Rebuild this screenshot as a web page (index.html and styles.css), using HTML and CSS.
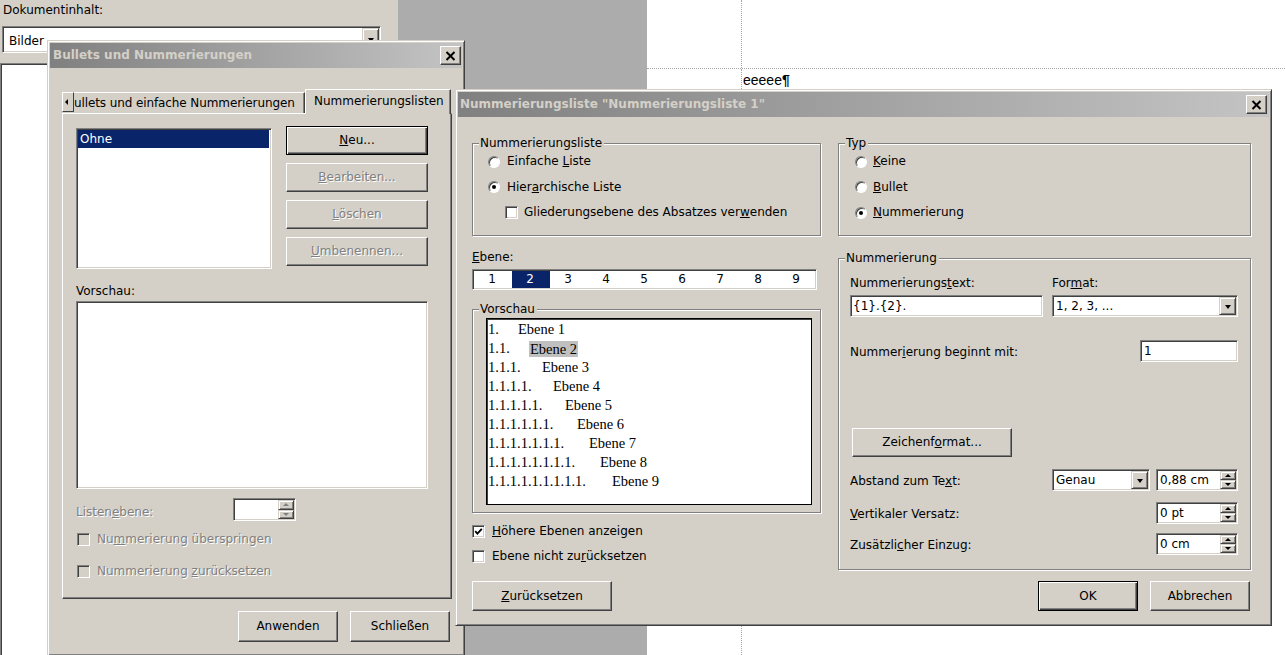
FILE: index.html
```html
<!DOCTYPE html>
<html lang="de">
<head>
<meta charset="utf-8">
<title>Nummerierungsliste</title>
<link rel="stylesheet" href="styles.css">
</head>
<body>
<div class="desktop">
  <div class="side">
    <div class="side-label">Dokumentinhalt:</div>
    <div class="field combo side-combo"><span class="combo-text">Bilder</span><span class="drop"></span></div>
    <div class="side-list"></div>
  </div>
  <div class="workspace"></div>
  <div class="doc">
    <div class="doc-top"><div class="doc-margin"></div></div>
    <div class="doc-body"><div class="doc-margin"></div><div class="doc-text">eeeee<span class="pilcrow">¶</span></div></div>
  </div>

  <div class="window dlg1">
    <div class="titlebar">
      <span class="title">Bullets und Nummerierungen</span>
      <span class="close-btn"><svg width="11" height="10" viewBox="0 0 11 10"><path d="M1.5 1 L9.5 9 M9.5 1 L1.5 9" stroke="#000" stroke-width="2"/></svg></span>
    </div>
    <div class="dlg1-body">
      <div class="tabstrip">
        <span class="tab-scroll"></span>
        <div class="tab tab-inactive"><span class="tab-label">ullets und einfache Nummerierungen</span></div>
        <div class="tab tab-active">Nummerierungslisten</div>
      </div>
      <div class="tabpanel">
        <div class="list-row">
          <div class="field listbox"><div class="list-item sel">Ohne</div></div>
          <div class="btn-col">
            <button class="btn default"><span><u>N</u>eu...</span></button>
            <button class="btn disabled"><span><u>B</u>earbeiten...</span></button>
            <button class="btn disabled"><span><u>L</u>öschen</span></button>
            <button class="btn disabled"><span><u>U</u>mbenennen...</span></button>
          </div>
        </div>
        <div class="plain-label vorschau-label">Vorschau:</div>
        <div class="field preview1"></div>
        <div class="level-row">
          <span class="plain-label disabled-text level-label">Listen<u>e</u>bene:</span>
          <div class="field spin spin-dis">
            <span class="spin-text"></span>
            <span class="spin-btns"><span class="sb up"></span><span class="sb down"></span></span>
          </div>
        </div>
        <div class="opt d1-check first"><span class="checkbox dis"></span><span class="disabled-text">Nu<u>m</u>merierung überspringen</span></div>
        <div class="opt d1-check"><span class="checkbox dis"></span><span class="disabled-text">Nummerierung <u>z</u>urücksetzen</span></div>
      </div>
      <div class="dlg1-buttons">
        <button class="btn w100">Anwenden</button>
        <button class="btn w100">Schließen</button>
      </div>
    </div>
  </div>

  <div class="window dlg2">
    <div class="titlebar">
      <span class="title">Nummerierungsliste "Nummerierungsliste 1"</span>
      <span class="close-btn"><svg width="11" height="10" viewBox="0 0 11 10"><path d="M1.5 1 L9.5 9 M9.5 1 L1.5 9" stroke="#000" stroke-width="2"/></svg></span>
    </div>
    <div class="dlg2-body">
      <div class="dlg2-grid">
        <div class="col-left">
          <div class="group g-list">
            <div class="legend">Nummerierungsliste</div>
            <div class="gc">
              <div class="opt"><span class="radio"></span><span>Einfache <u>L</u>iste</span></div>
              <div class="opt"><span class="radio on"></span><span>Hier<u>a</u>rchische Liste</span></div>
              <div class="opt sub"><span class="checkbox"></span><span>Gliederungsebene des Absatzes ver<u>w</u>enden</span></div>
            </div>
          </div>
          <div class="plain-label ebene-label"><u>E</u>bene:</div>
          <div class="levels">
            <span>1</span><span class="sel">2</span><span>3</span><span>4</span><span>5</span><span>6</span><span>7</span><span>8</span><span>9</span>
          </div>
          <div class="group g-preview">
            <div class="legend">Vorschau</div>
            <div class="gc">
              <div class="num-preview">
                <div class="prow"><span class="pn l1">1.</span><span>Ebene 1</span></div>
                <div class="prow"><span class="pn l2">1.1.</span><span class="hl">Ebene 2</span></div>
                <div class="prow"><span class="pn l3">1.1.1.</span><span>Ebene 3</span></div>
                <div class="prow"><span class="pn l4">1.1.1.1.</span><span>Ebene 4</span></div>
                <div class="prow"><span class="pn l5">1.1.1.1.1.</span><span>Ebene 5</span></div>
                <div class="prow"><span class="pn l6">1.1.1.1.1.1.</span><span>Ebene 6</span></div>
                <div class="prow"><span class="pn l7">1.1.1.1.1.1.1.</span><span>Ebene 7</span></div>
                <div class="prow"><span class="pn l8">1.1.1.1.1.1.1.1.</span><span>Ebene 8</span></div>
                <div class="prow"><span class="pn l9">1.1.1.1.1.1.1.1.1.</span><span>Ebene 9</span></div>
              </div>
            </div>
          </div>
          <div class="opt chk first-chk"><span class="checkbox checked"><svg width="9" height="9" viewBox="0 0 9 9"><path d="M1.2 4.2 L3.4 6.6 L7.8 1.8" fill="none" stroke="#000" stroke-width="1.9"/></svg></span><span><u>H</u>öhere Ebenen anzeigen</span></div>
          <div class="opt chk"><span class="checkbox"></span><span>Ebene nicht zu<u>r</u>ücksetzen</span></div>
        </div>
        <div class="col-right">
          <div class="group g-typ">
            <div class="legend">Typ</div>
            <div class="gc">
              <div class="opt"><span class="radio"></span><span><u>K</u>eine</span></div>
              <div class="opt"><span class="radio"></span><span><u>B</u>ullet</span></div>
              <div class="opt"><span class="radio on"></span><span><u>N</u>ummerierung</span></div>
            </div>
          </div>
          <div class="group g-num">
            <div class="legend">Nummerierung</div>
            <div class="gc">
              <div class="num-labels"><span class="w193">Nummerierungs<u>t</u>ext:</span><span>For<u>m</u>at:</span></div>
              <div class="num-inputs">
                <div class="field input w193">{1}.{2}.</div>
                <div class="field combo w186"><span class="combo-text">1, 2, 3, ...</span><span class="drop"></span></div>
              </div>
              <div class="frow r-begin"><span class="flabel">Nummer<u>i</u>erung beginnt mit:</span><div class="field input w98">1</div></div>
              <button class="btn zf"><span>Zeichenf<u>o</u>rmat...</span></button>
              <div class="frow r-abstand">
                <span class="flabel">Abstand zum Te<u>x</u>t:</span>
                <div class="field combo w98"><span class="combo-text">Genau</span><span class="drop"></span></div>
                <div class="field spin w82"><span class="spin-text">0,88 cm</span><span class="spin-btns"><span class="sb up"></span><span class="sb down"></span></span></div>
              </div>
              <div class="frow r-vert">
                <span class="flabel"><u>V</u>ertikaler Versatz:</span>
                <div class="field spin w82"><span class="spin-text">0 pt</span><span class="spin-btns"><span class="sb up"></span><span class="sb down"></span></span></div>
              </div>
              <div class="frow r-einzug">
                <span class="flabel">Zusätzli<u>c</u>her Einzug:</span>
                <div class="field spin w82"><span class="spin-text">0 cm</span><span class="spin-btns"><span class="sb up"></span><span class="sb down"></span></span></div>
              </div>
            </div>
          </div>
        </div>
      </div>
      <div class="dlg2-buttons">
        <button class="btn reset"><span><u>Z</u>urücksetzen</span></button>
        <div class="btn-pair">
          <button class="btn default w100">OK</button>
          <button class="btn w100">Abbrechen</button>
        </div>
      </div>
    </div>
  </div>
</div>
</body>
</html>
```

FILE: styles.css
```css
* { box-sizing: border-box; }
html, body { margin: 0; padding: 0; }
body {
  width: 1285px;
  height: 655px;
  overflow: hidden;
  font-family: "DejaVu Sans", Verdana, sans-serif;
  font-size: 12px;
  line-height: 15px;
  color: #000;
  background: #d4d0c8;
}
u { text-decoration: underline; text-underline-offset: 1px; }

.desktop { position: relative; display: flex; width: 1285px; height: 655px; }

/* ---------- background panels ---------- */
.side { width: 398px; background: #d4d0c8; display: flex; flex-direction: column; }
.side-label { padding: 3px 0 0 3px; height: 18px; }
.side-combo { margin: 8px 0 0 2px; width: 379px; height: 27px; }
.side-list {
  margin-top: 10px;
  width: 381px;
  flex: 1;
  background: #fff;
  border-top: 1px solid #808080;
  border-left: 1px solid #808080;
  box-shadow: inset 1px 1px 0 #404040;
}
.workspace { width: 249px; background: #acacac; }
.doc { flex: 1; background: #fff; display: flex; flex-direction: column; }
.doc-top { height: 69px; border-bottom: 1px dotted #a8a8a8; display: flex; }
.doc-margin { width: 95px; border-right: 1px dotted #a8a8a8; }
.doc-body { flex: 1; display: flex; }
.doc-text { padding: 3px 0 0 1px; font-family: "Liberation Sans", Arial, sans-serif; font-size: 14px; line-height: 16px; }
.pilcrow { font-weight: bold; }

/* ---------- generic controls ---------- */
.field {
  background: #fff;
  border: 1px solid;
  border-color: #808080 #fff #fff #808080;
  box-shadow: inset 1px 1px 0 #404040, inset -1px -1px 0 #d4d0c8;
}
.input { height: 22px; display: flex; align-items: center; padding-left: 2px; }
.combo { display: flex; align-items: stretch; }
.combo-text { flex: 1; display: flex; align-items: center; padding-left: 3px; white-space: nowrap; }
.side-combo .combo-text { padding: 3px 0 0 6px; }
.drop {
  width: 17px;
  margin: 1px 1px 1px 0;
  background: #d4d0c8;
  border: 1px solid;
  border-color: #d4d0c8 #404040 #404040 #d4d0c8;
  box-shadow: inset 1px 1px 0 #fff, inset -1px -1px 0 #808080;
  display: flex;
  align-items: center;
  justify-content: center;
}
.drop::after {
  content: "";
  border-left: 3.5px solid transparent;
  border-right: 3.5px solid transparent;
  border-top: 4px solid #000;
  margin-top: 1px;
}
.spin { display: flex; align-items: stretch; height: 22px; }
.spin-text { flex: 1; display: flex; align-items: center; padding-left: 3px; white-space: nowrap; }
.spin-btns { width: 16px; display: flex; flex-direction: column; margin: 1px 1px 1px 0; }
.sb {
  flex: 1;
  background: #d4d0c8;
  border: 1px solid;
  border-color: #d4d0c8 #404040 #404040 #d4d0c8;
  box-shadow: inset 1px 1px 0 #fff, inset -1px -1px 0 #808080;
  display: flex;
  align-items: center;
  justify-content: center;
}
.sb.up::after { content: ""; border-left: 3px solid transparent; border-right: 3px solid transparent; border-bottom: 3px solid #000; }
.sb.down::after { content: ""; border-left: 3px solid transparent; border-right: 3px solid transparent; border-top: 3px solid #000; }
.spin-dis .sb.up::after { border-bottom-color: #808080; }
.spin-dis .sb.down::after { border-top-color: #808080; }

.btn {
  font: inherit;
  color: #000;
  margin: 0;
  padding: 0;
  background: #d4d0c8;
  border: 1px solid;
  border-color: #fff #404040 #404040 #fff;
  box-shadow: inset -1px -1px 0 #808080;
  display: flex;
  align-items: center;
  justify-content: center;
  line-height: 15px;
}
.btn.default {
  border-color: #000;
  box-shadow: inset 1px 1px 0 #fff, inset -1px -1px 0 #404040, inset -2px -2px 0 #808080;
}
.btn.disabled, .disabled-text { color: #808080; text-shadow: 1px 1px 0 #fff; }
.w100 { width: 100px; }

.checkbox {
  width: 13px;
  height: 13px;
  flex: none;
  background: #fff;
  border: 1px solid;
  border-color: #808080 #fff #fff #808080;
  box-shadow: inset 1px 1px 0 #404040, inset -1px -1px 0 #d4d0c8;
  display: flex;
  align-items: center;
  justify-content: center;
}
.checkbox.dis { background: #d4d0c8; }
.radio {
  width: 12px;
  height: 12px;
  flex: none;
  border-radius: 50%;
  background: #fff;
  border: 1px solid;
  border-color: #808080 #fff #fff #808080;
  box-shadow: inset 1px 1px 0 #404040;
  display: flex;
  align-items: center;
  justify-content: center;
}
.radio.on::after { content: ""; width: 4px; height: 4px; border-radius: 50%; background: #000; }

.opt { display: flex; align-items: center; height: 25px; white-space: nowrap; }

/* ---------- windows ---------- */
.window {
  position: absolute;
  background: #d4d0c8;
  border: 1px solid;
  border-color: #d4d0c8 #404040 #404040 #d4d0c8;
  box-shadow: inset 1px 1px 0 #fff, inset -1px -1px 0 #808080;
  padding: 2px;
}
.titlebar {
  height: 25px;
  display: flex;
  align-items: center;
  justify-content: space-between;
  background: linear-gradient(to right, #808080, #c4c4c4);
}
.title { font-weight: bold; color: #d4d0c8; white-space: nowrap; }
.close-btn {
  width: 21px;
  height: 19px;
  background: #d4d0c8;
  border: 1px solid;
  border-color: #fff #404040 #404040 #fff;
  box-shadow: inset -1px -1px 0 #808080;
  display: flex;
  align-items: center;
  justify-content: center;
}

/* ---------- dialog 1 ---------- */
.dlg1 { left: 47px; top: 40px; width: 418px; height: 616px; }
.dlg1 .title { padding-left: 3px; }
.dlg1 .close-btn { margin-right: 1px; }
.dlg1-body { padding: 21px 0 0 12px; }
.tabstrip { display: flex; align-items: flex-end; height: 24px; }
.tab-scroll {
  width: 12px;
  height: 20px;
  margin-bottom: 1px;
  flex: none;
  background: #d4d0c8;
  border: 1px solid;
  border-color: #fff #404040 #404040 #fff;
  display: flex;
  align-items: center;
  padding-left: 2px;
}
.tab-scroll::after { content: ""; border-top: 3px solid transparent; border-bottom: 3px solid transparent; border-right: 3px solid #000; }
.tab {
  background: #d4d0c8;
  white-space: nowrap;
  display: flex;
  align-items: center;
}
.tab-inactive {
  width: 231px;
  height: 21px;
  border-top: 1px solid #fff;
  border-right: 1px solid #404040;
  box-shadow: inset -1px 0 0 #808080;
  padding: 1px 0 0 0;
}
.tab-label { display: block; letter-spacing: -0.1px; }
.tab-active {
  position: relative;
  z-index: 1;
  width: 146px;
  height: 25px;
  margin-bottom: -1px;
  border-top: 1px solid #fff;
  border-left: 1px solid #fff;
  border-right: 1px solid #404040;
  box-shadow: inset -1px 0 0 #808080;
  padding: 0 0 1px 8px;
}
.tabpanel {
  width: 390px;
  height: 486px;
  border: 1px solid;
  border-color: #fff #404040 #404040 #fff;
  box-shadow: inset -1px -1px 0 #808080;
  padding: 14px 0 0 13px;
}
.list-row { display: flex; gap: 14px; align-items: flex-start; }
.listbox { width: 196px; height: 141px; padding: 1px 2px 0 1px; }
.list-item { height: 18px; line-height: 18px; padding-left: 2px; }
.list-item.sel { background: #0a246a; color: #fff; }
.btn-col { display: flex; flex-direction: column; gap: 8px; margin-top: -2px; }
.btn-col .btn { width: 142px; height: 29px; }
.vorschau-label { margin-top: 15px; }
.preview1 { width: 352px; height: 188px; margin-top: 2px; }
.level-row { display: flex; align-items: center; margin-top: 9px; height: 23px; }
.level-label { width: 157px; padding-top: 5px; }
.spin-dis { width: 63px; height: 23px; }
.d1-check { height: 24px; }
.d1-check.first { margin-top: 6px; }
.d1-check + .d1-check { margin-top: 8px; }
.d1-check .checkbox { margin: 0 7px 0 1px; }
.dlg1-buttons { display: flex; justify-content: flex-end; gap: 12px; width: 390px; padding-right: 2px; margin-top: 12px; }
.dlg1-buttons .btn { height: 31px; }

/* ---------- dialog 2 ---------- */
.dlg2 { left: 455px; top: 89px; width: 817px; height: 537px; }
.dlg2 .title { padding-left: 2px; }
.dlg2 .close-btn { margin-right: 2px; }
.dlg2-body { padding: 26px 0 0 14px; }
.dlg2-grid { display: grid; grid-template-columns: 349px 413px; column-gap: 17px; align-items: start; }
.group {
  border: 1px solid #808080;
  box-shadow: inset 1px 1px 0 #fff, 1px 1px 0 #fff;
}
.legend {
  width: fit-content;
  margin: -8px 0 -7px 6px;
  padding: 0 2px 0 1px;
  background: #d4d0c8;
  height: 15px;
  white-space: nowrap;
}
.g-list, .g-typ { height: 93px; }
.g-list .gc { padding: 5px 0 0 15px; }
.g-typ .gc { padding: 5px 0 0 16px; }
.g-list .opt, .g-typ .opt { height: 25.5px; }
.opt .radio { margin-right: 7px; }
.g-typ .opt .radio { margin-right: 6px; }
.opt.sub { padding-left: 17px; }
.opt.sub .checkbox { margin-right: 6px; }
.ebene-label { margin-top: 14px; }
.levels {
  display: flex;
  width: 345px;
  height: 21px;
  margin-top: 4px;
  background: #fff;
  border: 1px solid;
  border-color: #808080 #fff #fff #808080;
  box-shadow: inset 1px 1px 0 #404040, inset -1px -1px 0 #d4d0c8;
  padding: 1px 0 1px 1px;
}
.levels span { width: 38px; display: flex; align-items: center; justify-content: center; padding-right: 2px; }
.levels span.sel { background: #0a246a; color: #fff; }
.g-preview { height: 204px; margin-top: 19px; }
.g-preview .gc { padding: 8px 0 0 13px; }
.num-preview {
  width: 326px;
  height: 187px;
  background: #fff;
  border: 1px solid #000;
  box-shadow: inset 1px 1px 0 #404040;
  padding: 1px 0 0 1px;
  font-family: "Liberation Serif", "Times New Roman", serif;
  font-size: 14.5px;
}
.prow { display: flex; height: 19px; line-height: 19px; white-space: nowrap; }
.pn { flex: none; }
.l1 { width: 30px; }
.l2 { width: 41px; }
.l3 { width: 54px; }
.l4 { width: 65px; }
.l5 { width: 77px; }
.l6 { width: 89px; }
.l7 { width: 101px; }
.l8 { width: 112px; }
.l9 { width: 124px; }
.hl { background: #c0c0c0; line-height: 16px; height: 16px; margin-top: 1.5px; padding: 0 1px; }
.chk .checkbox { margin-right: 7px; }
.first-chk { margin-top: 6px; }

.g-num { height: 312px; margin-top: 22px; }
.g-num .gc { padding: 17px 12px 0 11px; }
.num-labels { display: flex; gap: 9px; height: 15px; }
.w193 { width: 193px; }
.w186 { width: 186px; }
.w98 { width: 98px; }
.w82 { width: 82px; }
.num-inputs { display: flex; gap: 9px; margin-top: 4px; }
.num-inputs .field { height: 22px; }
.frow { display: flex; align-items: center; height: 22px; gap: 6px; }
.frow .field { height: 22px; }
.flabel { flex: 1; white-space: nowrap; padding-top: 3px; }
.r-begin { margin-top: 23px; }
.r-begin .input { padding-left: 3px; }
.zf { width: 160px; height: 29px; margin: 66px 0 0 2px; }
.r-abstand { margin-top: 12px; }
.r-vert { margin-top: 11px; }
.r-einzug { margin-top: 9px; }

.dlg2-buttons { display: flex; justify-content: space-between; width: 778px; margin-top: 11px; }
.dlg2-buttons .btn { height: 30px; }
.btn.reset { width: 140px; }
.btn-pair { display: flex; gap: 12px; }
```
